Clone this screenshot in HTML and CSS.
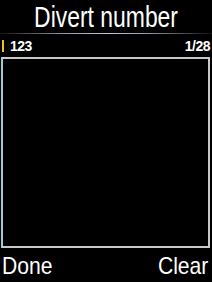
FILE: index.html
```html
<!DOCTYPE html>
<html lang="en">
<head>
    <meta charset="UTF-8">
    <meta name="viewport" content="width=device-width, initial-scale=1.0">
    <title>Divert number</title>
    <link rel="stylesheet" href="styles.css">
</head>
<body>
    <div class="screen">
        <!-- Title -->
        <div class="title-bar">
            <h1>Divert number</h1>
        </div>

        <!-- Input row -->
        <div class="input-row">
            <span class="cursor"></span>
            <span class="value">123</span>
            <span class="counter">1/28</span>
        </div>

        <!-- Text area -->
        <div class="text-box"></div>

        <!-- Softkeys -->
        <div class="softkeys">
            <span>Done</span>
            <span>Clear</span>
        </div>
    </div>
</body>
</html>
```

FILE: styles.css
```css
body {
    margin: 0;
    padding: 0;
    background-color: #000;
    color: #fff;
    font-family: "Liberation Sans", Arial, sans-serif;
}
.screen {
    width: 212px;
    height: 282px;
    display: flex;
    flex-direction: column;
    overflow: hidden;
}

/* Title */
.title-bar {
    height: 33px;
    position: relative;
    text-align: center;
}
.title-bar h1 {
    display: inline-block;
    margin: 0;
    font-size: 29px;
    font-weight: normal;
    line-height: 34px;
    transform: scaleX(0.79);
}
.title-bar::after {
    content: "";
    position: absolute;
    left: 0;
    right: 0;
    bottom: -1px;
    height: 1px;
    background: linear-gradient(to right, #111, #9a98a8 30%, #c8c6d4 50%, #9a98a8 70%, #111);
}

/* Input row */
.input-row {
    height: 22px;
    display: flex;
    align-items: center;
    padding: 2px 2px 0 2px;
    font-size: 14px;
    font-weight: bold;
}
.cursor {
    width: 2px;
    height: 12px;
    background-color: #f0c020;
    margin-right: 6px;
}
.value {
    flex: 1;
    letter-spacing: -0.5px;
}
.counter {
    letter-spacing: -0.5px;
}

/* Text area */
.text-box {
    height: 187px;
    margin: 0 2px 0 1px;
    border: 2px solid #c8c8c8;
    border-left-color: #9ccdd6;
}

/* Softkeys */
.softkeys {
    flex: 1;
    display: flex;
    justify-content: space-between;
    align-items: center;
    padding: 2px 4px 0 2px;
    font-size: 24px;
}
.softkeys span {
    display: inline-block;
    transform: scaleX(0.88);
}
.softkeys span:first-child {
    transform-origin: left center;
}
.softkeys span:last-child {
    transform-origin: right center;
}
```
